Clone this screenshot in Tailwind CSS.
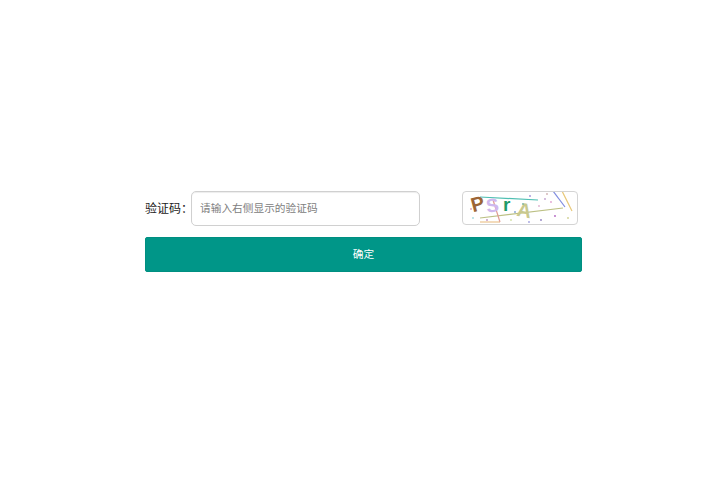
<!DOCTYPE html>
<html lang="zh">
<head>
<meta charset="utf-8" />
<title>验证码</title>
<script src="https://cdn.jsdelivr.net/npm/@tailwindcss/browser@4"></script>
</head>
<body class="bg-white font-['Liberation_Sans','Noto_Sans_CJK_SC',sans-serif]">
  <div class="w-[710px] h-[501px] overflow-hidden pt-[191px] pl-[145px]">
    <form class="w-[437px] flex flex-col gap-[11px]">
      <div class="flex items-center">
        <label class="w-[46px] h-[35px] pt-px text-[12px] leading-[35px] text-[#222] whitespace-nowrap">验证码：</label>
        <input class="w-[229px] h-[35px] px-[8px] pb-[2px] border border-[#d0d0d0] rounded-[5px] bg-white text-[10.7px] outline-none placeholder:text-[#808080] shadow-[inset_0_1px_1px_rgba(0,0,0,0.075)]" placeholder="请输入右侧显示的验证码" />
        <div class="ml-[42px] w-[116px] h-[34px] mb-[1px] border border-[#d4d4d4] rounded-[4px] overflow-hidden bg-white">
          <svg width="114" height="32" viewBox="0 0 114 32">
            <g stroke-width="1.2">
              <line x1="17" y1="5" x2="75" y2="8" stroke="#4fbfb2" />
              <line x1="17" y1="26" x2="100" y2="16" stroke="#bcc084" />
              <line x1="17" y1="30" x2="37" y2="30" stroke="#e8b878" />
              <line x1="30" y1="8" x2="37" y2="30" stroke="#e09c94" />
              <line x1="90" y1="-1" x2="102" y2="15" stroke="#7f8ce0" />
              <line x1="99" y1="-1" x2="109" y2="19" stroke="#e8c878" />
            </g>
            <g font-family="'Liberation Sans',sans-serif" font-weight="700">
              <text x="8" y="19" font-size="20" fill="#9c6536" transform="rotate(-15 14 12)">P</text>
              <text x="23" y="20" font-size="19" fill="#cfb8ee" transform="rotate(-8 29 13)">S</text>
              <text x="40" y="19" font-size="19" fill="#1f9a68">r</text>
              <text x="54" y="25" font-size="20" fill="#c9c98e" transform="rotate(10 61 18)">A</text>
            </g>
            <g>
              <circle cx="8" cy="17" r="0.9" fill="#e0a0b0" />
              <circle cx="10" cy="26" r="0.9" fill="#a0d8e0" />
              <circle cx="52" cy="20" r="0.9" fill="#80a0d0" />
              <circle cx="48" cy="28" r="0.9" fill="#d0e0a0" />
              <circle cx="67" cy="4" r="0.9" fill="#a090d8" />
              <circle cx="76" cy="14" r="0.9" fill="#e0b0d0" />
              <circle cx="82" cy="7" r="0.9" fill="#c0a0d0" />
              <circle cx="84" cy="2" r="0.9" fill="#d0b0b0" />
              <circle cx="88" cy="10" r="0.9" fill="#e0a0d0" />
              <circle cx="92" cy="24" r="0.9" fill="#b060c0" />
              <circle cx="78" cy="28" r="0.9" fill="#9080c0" />
              <circle cx="66" cy="30" r="0.9" fill="#a0a0e0" />
              <circle cx="105" cy="26" r="0.9" fill="#d0d090" />
              <circle cx="24" cy="28" r="0.9" fill="#c090c0" />
              <circle cx="60" cy="12" r="0.9" fill="#70b0a0" />
            </g>
          </svg>
        </div>
      </div>
      <button type="button" class="w-[437px] h-[35px] bg-[#009688] border border-[#008f81] rounded-[2px] text-white text-[10.7px]">确定</button>
    </form>
  </div>
</body>
</html>
